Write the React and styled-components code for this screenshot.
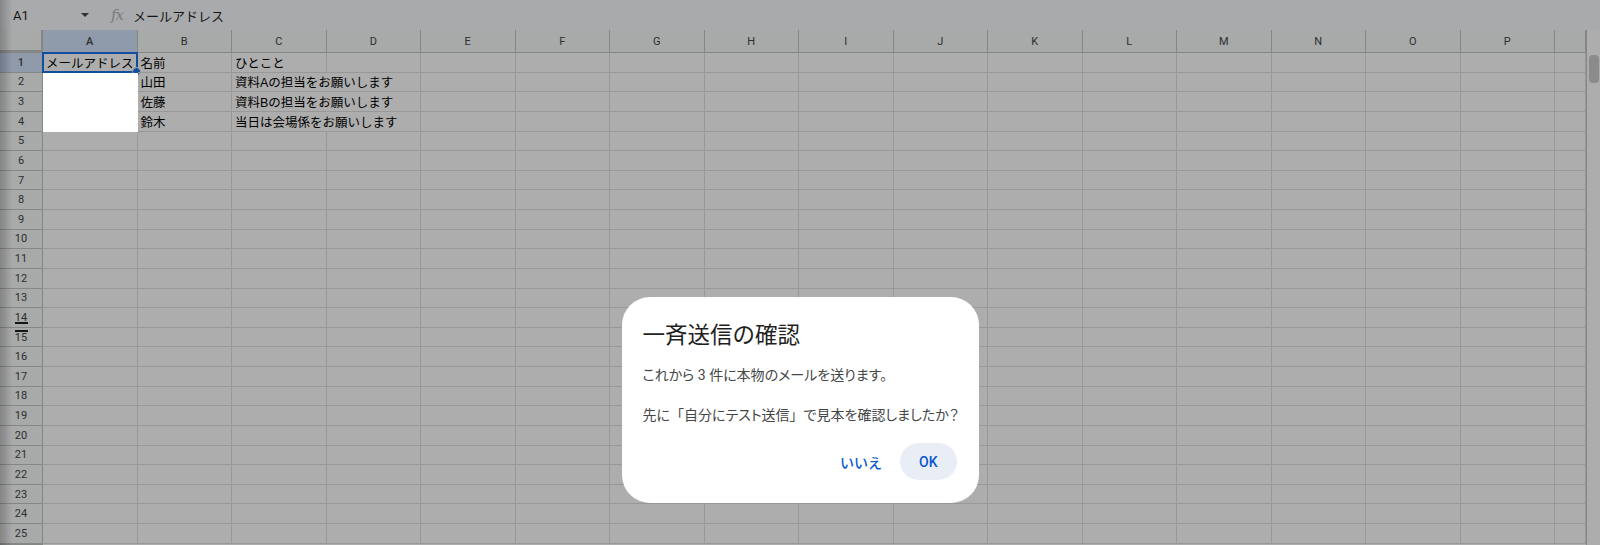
import React from "react";
import styled, { createGlobalStyle } from "styled-components";

const COLS = "ABCDEFGHIJKLMNOP".split("");
const ROW_COUNT = 25;

const data = {
  1: ["メールアドレス", "名前", "ひとこと"],
  2: ["", "山田", "資料Aの担当をお願いします"],
  3: ["", "佐藤", "資料Bの担当をお願いします"],
  4: ["", "鈴木", "当日は会場係をお願いします"],
};

const GlobalStyle = createGlobalStyle`
  html, body {
    margin: 0;
    height: 100%;
    overflow: hidden;
    background: #ffffff;
  }
`;

const Page = styled.div`
  width: 1600px;
  height: 545px;
  display: flex;
  flex-direction: column;
  font-family: Roboto, "Noto Sans CJK JP", sans-serif;
`;

const FormulaBar = styled.div`
  height: 30px;
  flex: none;
  display: flex;
  align-items: center;
  padding-left: 13px;
  background: #f9fbfd;
  font-size: 13px;
  color: #1f1f1f;
`;

const NameBox = styled.div`
  width: 76px;
  display: flex;
  align-items: center;
  justify-content: space-between;
`;

const Caret = styled.span`
  width: 0;
  height: 0;
  border-left: 4px solid transparent;
  border-right: 4px solid transparent;
  border-top: 4px solid #444746;
`;

const Fx = styled.span`
  margin-left: 22px;
  font-family: "DejaVu Serif", serif;
  font-style: italic;
  font-size: 15px;
  color: #b4b7bb;
  letter-spacing: -1px;
`;

const Formula = styled.span`
  margin-left: 10px;
  font-family: "Liberation Sans", "Noto Sans CJK JP", sans-serif;
`;

const SheetArea = styled.div`
  flex: 1;
  display: flex;
  min-height: 0;
  overflow: hidden;
`;

const Grid = styled.div`
  flex: 1;
  display: grid;
  grid-template-columns: 43px repeat(16, 94.5px) 1fr;
  grid-template-rows: 23px repeat(${ROW_COUNT}, 19.625px) 1fr;
  background: #ffffff;
`;

const Corner = styled.div`
  background: #f8f9fa;
  border-right: 3px solid #c4c7c5;
  border-bottom: 3px solid #c4c7c5;
  margin-right: -1px;
`;

const ColHead = styled.div`
  display: flex;
  align-items: center;
  justify-content: center;
  background: ${({ $active }) => ($active ? "#d3e3fd" : "#f8f9fa")};
  border-right: 1px solid #c4c7c5;
  border-bottom: 1px solid #c4c7c5;
  font-size: 11px;
  font-weight: ${({ $active }) => ($active ? 500 : 400)};
  color: #444746;
`;

const RowHead = styled.div`
  position: relative;
  display: flex;
  align-items: center;
  justify-content: center;
  background: ${({ $active }) => ($active ? "#d3e3fd" : "#f8f9fa")};
  border-right: 1px solid #c4c7c5;
  border-bottom: 1px solid #c4c7c5;
  font-size: 11px;
  font-weight: ${({ $active }) => ($active ? 500 : 400)};
  color: #444746;

  &::after {
    content: "";
    display: ${({ $mark }) => ($mark ? "block" : "none")};
    position: absolute;
    left: 15px;
    width: 13px;
    height: 2px;
    background: #1f1f1f;
    top: ${({ $mark }) => ($mark === "below" ? "14px" : "2px")};
  }
`;

const Cell = styled.div`
  position: relative;
  z-index: ${({ $blank }) => ($blank ? 3 : "auto")};
  background: ${({ $blank }) => ($blank ? "#ffffff" : "transparent")};
  border-right: 1px solid
    ${({ $spill, $blank }) => ($spill || $blank ? "transparent" : "#e1e1e1")};
  border-bottom: 1px solid ${({ $blank }) => ($blank ? "#ffffff" : "#e1e1e1")};
  padding: 0 3px;
  display: flex;
  align-items: center;
  white-space: nowrap;
  overflow: visible;
  font-family: "Liberation Sans", "Noto Sans CJK JP", sans-serif;
  font-size: 12.5px;
  color: #000000;
`;

const Selection = styled.div`
  position: absolute;
  inset: -1px -1px -1px -1px;
  border: 2px solid #1a73e8;
  pointer-events: none;

  &::after {
    content: "";
    position: absolute;
    right: -5px;
    bottom: -5px;
    width: 7px;
    height: 7px;
    border-radius: 50%;
    background: #1a73e8;
    border: 1px solid #ffffff;
  }
`;

const ScrollTrack = styled.div`
  width: 10px;
  flex: none;
  border-left: 1px solid #c4c7c5;
  background: #ffffff;
  padding: 25px 1px 0 2px;
`;

const ScrollThumb = styled.div`
  height: 28px;
  border-radius: 4px;
  background: #cdcdcd;
`;

const Scrim = styled.div`
  position: fixed;
  inset: 0;
  z-index: 2;
  background: rgba(0, 0, 0, 0.32);
  display: flex;
  justify-content: center;
  align-items: flex-start;
  padding-top: 297px;
`;

const EdgeShade = styled.div`
  position: fixed;
  top: 0;
  bottom: 0;
  left: 0;
  width: 12px;
  z-index: 4;
  background: linear-gradient(to right, rgba(0, 0, 0, 0.22), rgba(0, 0, 0, 0));
  pointer-events: none;
`;

const Dialog = styled.div`
  width: 357px;
  box-sizing: border-box;
  padding: 24px 22px 23px 21px;
  background: #ffffff;
  border-radius: 28px;
  font-family: Roboto, "Noto Sans CJK JP", sans-serif;
`;

const Title = styled.h2`
  margin: 0;
  font-size: 22.5px;
  line-height: 28px;
  font-weight: 400;
  color: #1f1f1f;
`;

const Body = styled.div`
  margin-top: 16px;
  font-size: 14px;
  line-height: 20px;
  color: #444746;
  white-space: pre;
  font-feature-settings: "palt";
`;

/* brackets keep their full-width advance inside the proportional text */
const Bracket = styled.span`
  font-feature-settings: normal;
`;

const Actions = styled.div`
  margin-top: 18px;
  display: flex;
  justify-content: flex-end;
  gap: 6px;
`;

const ActionButton = styled.button`
  height: 37px;
  padding: 0 ${({ $tonal }) => ($tonal ? "19px" : "12px")};
  border: none;
  border-radius: 19px;
  background: ${({ $tonal }) => ($tonal ? "#e9eef6" : "transparent")};
  color: #0b57d0;
  font-family: Roboto, "Noto Sans CJK JP", sans-serif;
  font-size: 14px;
  font-weight: 500;
  cursor: pointer;
`;

const rowMark = (r) => (r === 14 ? "below" : r === 15 ? "above" : undefined);

export default function App() {
  const rows = Array.from({ length: ROW_COUNT }, (_, i) => i + 1);

  return (
    <>
      <GlobalStyle />
      <Page>
        <FormulaBar>
          <NameBox>
            A1
            <Caret />
          </NameBox>
          <Fx>fx</Fx>
          <Formula>メールアドレス</Formula>
        </FormulaBar>

        <SheetArea>
          <Grid>
            <Corner />
            {COLS.map((c) => (
              <ColHead key={c} $active={c === "A"}>
                {c}
              </ColHead>
            ))}
            <ColHead />

            {rows.map((r) => {
              const values = data[r] || [];
              return (
                <React.Fragment key={r}>
                  <RowHead $active={r === 1} $mark={rowMark(r)}>
                    {r}
                  </RowHead>
                  {COLS.map((c, ci) => {
                    const blank = ci === 0 && r >= 2 && r <= 4;
                    const spill = ci === 2 && r >= 2 && r <= 4;
                    return (
                      <Cell key={c} $blank={blank} $spill={spill}>
                        {values[ci]}
                        {r === 1 && ci === 0 && <Selection />}
                      </Cell>
                    );
                  })}
                  <Cell />
                </React.Fragment>
              );
            })}
            <RowHead />
          </Grid>
          <ScrollTrack>
            <ScrollThumb />
          </ScrollTrack>
        </SheetArea>
      </Page>

      <Scrim>
        <Dialog role="dialog">
          <Title>一斉送信の確認</Title>
          <Body>
            これから 3 件に本物のメールを送ります。
            {"\n\n"}
            先に<Bracket>「</Bracket>自分にテスト送信<Bracket>」</Bracket>で見本を確認しましたか？
          </Body>
          <Actions>
            <ActionButton>いいえ</ActionButton>
            <ActionButton $tonal>OK</ActionButton>
          </Actions>
        </Dialog>
      </Scrim>
      <EdgeShade />
    </>
  );
}
